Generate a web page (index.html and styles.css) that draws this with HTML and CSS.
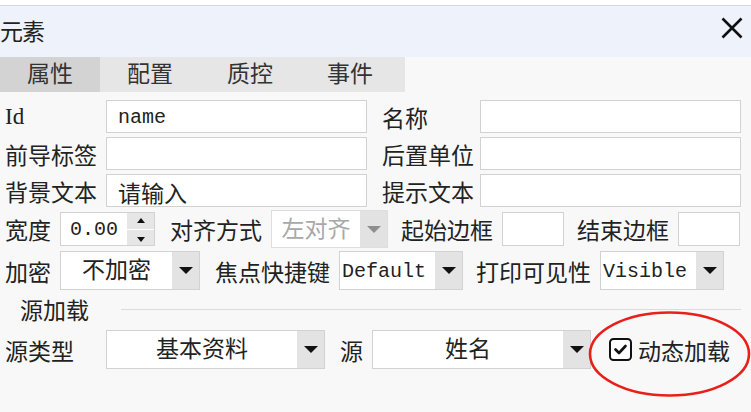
FILE: index.html
```html
<!DOCTYPE html>
<html>
<head lang="zh">
    <meta charset="UTF-8">
    <title>元素</title>
    <link rel="stylesheet" href="styles.css">
</head>
<body>
<div id="dialog">

    <div id="title-bar">
        <span id="title">元素</span>
        <span id="close">
            <svg width="22" height="22" viewBox="0 0 22 22">
                <path d="M1.5 1.5 L20.5 20.5 M20.5 1.5 L1.5 20.5" stroke="#111" stroke-width="2.6" fill="none"/>
            </svg>
        </span>
    </div>

    <ul id="tabs">
        <li class="active">属性</li>
        <li>配置</li>
        <li>质控</li>
        <li>事件</li>
    </ul>

    <div id="form">
        <div class="grid">
            <label>Id</label>
            <input class="text mono" type="text" value="name">
            <label class="right">名称</label>
            <input class="text" type="text" value="">

            <label>前导标签</label>
            <input class="text" type="text" value="">
            <label class="right">后置单位</label>
            <input class="text" type="text" value="">

            <label>背景文本</label>
            <input class="text" type="text" value="请输入">
            <label class="right">提示文本</label>
            <input class="text" type="text" value="">
        </div>

        <div class="row row-width">
            <label>宽度</label>
            <div class="spinner">
                <span class="spin-val mono">0.00</span>
                <span class="spin-btns">
                    <span class="spin-up"><i></i></span>
                    <span class="spin-down"><i></i></span>
                </span>
            </div>
            <label class="gap">对齐方式</label>
            <div class="select disabled w-align">
                <span class="val">左对齐</span>
                <span class="arrow"><i></i></span>
            </div>
            <label class="gap-s">起始边框</label>
            <input class="text small" type="text" value="">
            <label class="gap-s">结束边框</label>
            <input class="text small" type="text" value="">
        </div>

        <div class="row row-enc">
            <label>加密</label>
            <div class="select w-enc">
                <span class="val">不加密</span>
                <span class="arrow"><i></i></span>
            </div>
            <label class="gap">焦点快捷键</label>
            <div class="select w-mono">
                <span class="val mono left">Default</span>
                <span class="arrow"><i></i></span>
            </div>
            <label class="gap-s">打印可见性</label>
            <div class="select w-mono">
                <span class="val mono left">Visible</span>
                <span class="arrow"><i></i></span>
            </div>
        </div>

        <div class="section">
            <span>源加载</span>
            <span class="line"></span>
        </div>

        <div class="row row-src">
            <label class="lbl-src">源类型</label>
            <div class="select w-src">
                <span class="val">基本资料</span>
                <span class="arrow"><i></i></span>
            </div>
            <label class="gap">源</label>
            <div class="select w-src">
                <span class="val">姓名</span>
                <span class="arrow"><i></i></span>
            </div>
            <div class="dyn">
                <span class="check">
                    <svg width="23" height="23" viewBox="0 0 23 23">
                        <rect x="1" y="1" width="21" height="21" rx="3.5" fill="#fff" stroke="#111" stroke-width="2"/>
                        <path d="M6.5 11.5 L10 15 L16.5 8" stroke="#111" stroke-width="2.6" fill="none" stroke-linecap="round" stroke-linejoin="round"/>
                    </svg>
                </span>
                <span>动态加载</span>
                <svg class="ring" width="163" height="86" viewBox="0 0 163 86">
                    <ellipse cx="81.5" cy="43" rx="79.5" ry="41.5" fill="none" stroke="#e8201a" stroke-width="2.6"/>
                </svg>
            </div>
        </div>
    </div>
</div>
</body>
</html>
```

FILE: styles.css
```css
* {
    margin: 0;
    padding: 0;
    box-sizing: border-box;
}

ul {
    list-style: none;
}

body {
    background: #f8f8f8;
    color: #222;
    font-family: "Liberation Serif", "Noto Sans CJK SC", serif;
    font-size: 23px;
}

.mono {
    font-family: "Liberation Mono", "Noto Sans CJK SC", monospace;
    font-size: 20px;
}

#dialog {
    width: 751px;
    height: 412px;
    border-top: 5px solid #fff;
}

#title-bar {
    height: 52px;
    border-top: 1px solid #d4d6da;
    background: #eef2fa;
    display: flex;
    justify-content: space-between;
    align-items: flex-start;
}

#title {
    margin-top: 13px;
    line-height: 28px;
    letter-spacing: -1px;
}

#close {
    margin: 11px 8px 0 0;
    width: 22px;
    height: 22px;
}

#tabs {
    width: 405px;
    height: 35px;
    background: #e6e6e6;
    display: flex;
}

#tabs li {
    width: 100px;
    line-height: 35px;
    text-align: center;
    color: #333;
}

#tabs li.active {
    background: #d3d3d3;
}

#form {
    width: 741px;
    padding: 8px 0 0 5px;
}

.grid {
    display: grid;
    grid-template-columns: 101px 261px 113px 261px;
    grid-auto-rows: 33px;
    row-gap: 4px;
    align-items: center;
}

.grid label.right {
    padding-left: 15px;
}

label {
    white-space: nowrap;
    color: #222;
}

input.text {
    height: 33px;
    border: 1px solid #d2d2d2;
    background: #fff;
    padding: 2px 0 0 11px;
    font-family: "Liberation Mono", "Noto Sans CJK SC", monospace;
    font-size: 23px;
    color: #222;
    outline: none;
}

input.text.mono {
    font-size: 20px;
}

.row {
    display: flex;
    align-items: center;
}

.row label {
    margin-right: 9px;
}

.row label.gap {
    margin-left: 15px;
}

.row label.gap-s {
    margin-left: 13px;
}

.row-width {
    margin-top: 3px;
    height: 38px;
}

.row-enc {
    margin-top: 3px;
    height: 39px;
}

.row-src {
    margin-top: 2px;
    height: 39px;
}

input.text.small {
    width: 62px;
    height: 34px;
}

.spinner {
    width: 95px;
    height: 34px;
    border: 1px solid #d2d2d2;
    background: #fff;
    display: flex;
}

.spin-val {
    flex: 1;
    padding: 1px 0 0 9px;
    line-height: 32px;
}

.spin-btns {
    width: 27px;
    display: flex;
    flex-direction: column;
    gap: 1px;
    background: #fff;
}

.spin-up, .spin-down {
    flex: 1;
    background: #e6e6e6;
    display: flex;
    justify-content: center;
    align-items: center;
}

.spin-up i, .spin-down i {
    width: 0;
    height: 0;
    border-left: 4px solid transparent;
    border-right: 4px solid transparent;
}

.spin-up i {
    border-bottom: 5px solid #111;
}

.spin-down i {
    border-top: 5px solid #111;
    margin-top: 5px;
}

.select {
    height: 39px;
    border: 1px solid #d2d2d2;
    background: #fff;
    display: flex;
}

.select .val {
    flex: 1;
    text-align: center;
    line-height: 37px;
    white-space: nowrap;
}

.select .val.mono {
    padding-top: 1px;
}

.select .val.left {
    text-align: left;
    padding-left: 2px;
}

.select .arrow {
    width: 27px;
    background: #e3e3e3;
    display: flex;
    justify-content: center;
    align-items: center;
}

.select .arrow i {
    width: 0;
    height: 0;
    border-left: 7px solid transparent;
    border-right: 7px solid transparent;
    border-top: 7px solid #111;
}

.select.disabled {
    height: 38px;
    border-color: #dedede;
}

.select.disabled .val {
    color: #a8a8a8;
}

.select.disabled .arrow {
    background: #e2e2e2;
}

.select.disabled .arrow i {
    border-top-color: #8e8e8e;
}

.w-align {
    width: 117px;
}

.w-enc {
    width: 140px;
}

.w-mono {
    width: 124px;
}

.w-src {
    width: 219px;
}

.row-src label.lbl-src {
    width: 101px;
    margin-right: 0;
}

.section {
    height: 38px;
    display: flex;
    align-items: center;
    padding-left: 15px;
}

.section .line {
    flex: 1;
    height: 1px;
    background: #dcdcdc;
    margin-left: 32px;
}

.dyn {
    position: relative;
    margin-left: 18px;
    display: flex;
    align-items: center;
    gap: 6px;
}

.check {
    width: 23px;
    height: 23px;
    display: flex;
}

.ring {
    position: absolute;
    left: -21px;
    top: -22px;
}
```
